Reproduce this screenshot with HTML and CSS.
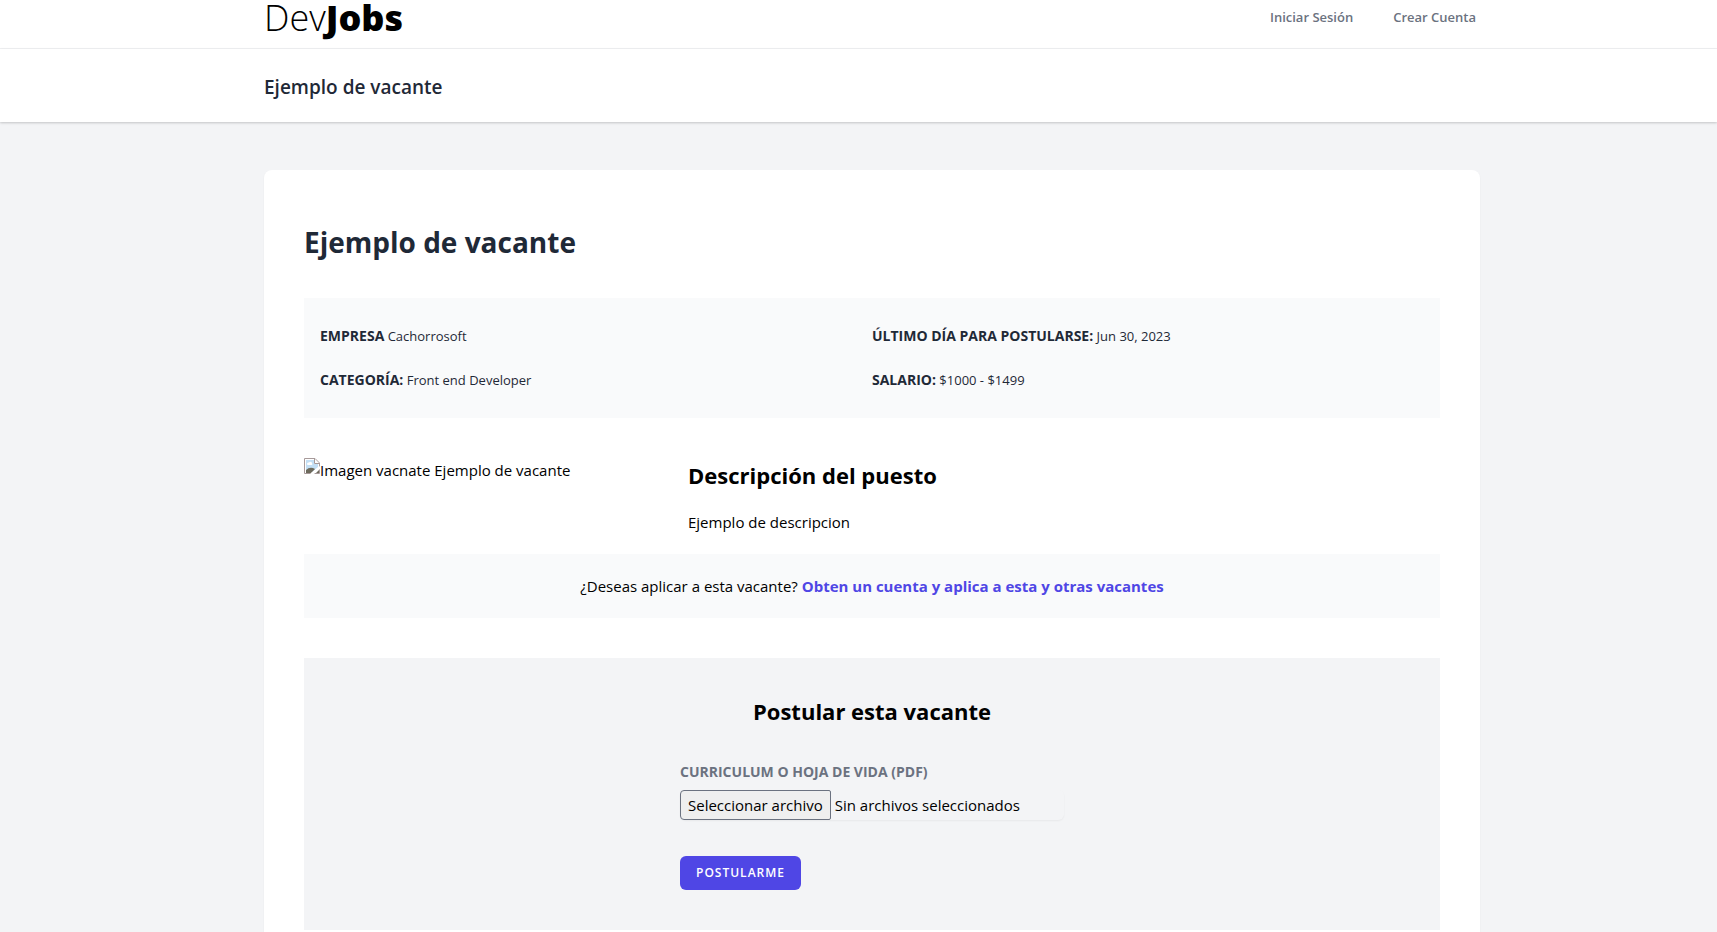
FILE: index.html
```html
<!DOCTYPE html>
<html lang="es">
<head>
<meta charset="utf-8">
<meta name="viewport" content="width=device-width, initial-scale=1">
<title>DevJobs</title>
<link rel="stylesheet" href="styles.css">
</head>
<body>
<nav class="nav gutter">
  <div class="container nav-row">
    <a class="logo" href="#">Dev<span class="logo-strong">Jobs</span></a>
    <div class="nav-links">
      <a class="nav-link" href="#">Iniciar Sesión</a>
      <a class="nav-link" href="#">Crear Cuenta</a>
    </div>
  </div>
</nav>
<header class="header gutter">
  <div class="container">
    <h2 class="header-title">Ejemplo de vacante</h2>
  </div>
</header>
<main class="main gutter">
  <article class="container card">
    <h3 class="title">Ejemplo de vacante</h3>
    <div class="facts">
      <p class="fact"><b class="fact-name">Empresa</b> Cachorrosoft</p>
      <p class="fact"><b class="fact-name">Último día para postularse:</b> Jun 30, 2023</p>
      <p class="fact"><b class="fact-name">Categoría:</b> Front end Developer</p>
      <p class="fact"><b class="fact-name">Salario:</b> $1000 - $1499</p>
    </div>
    <div class="detail">
      <div class="picture">
        <svg class="picture-icon" viewBox="0 0 16 16" aria-hidden="true">
          <path d="M0.500 15.500V0.500H11L15.500 5V15.500Z" fill="#fff" stroke="#a79a9a"/>
          <path d="M2 2H10V6H14V9L8 14H2Z" fill="#c3dff5"/>
          <path d="M3 6Q3 4 5 4.500Q7 3 8 5Q9 7 7 7H4Q3 7 3 6Z" fill="#fff"/>
          <path d="M2 14V12Q5 9 9 10L11 11L7 15H2Z" fill="#6d6a5c"/>
          <path d="M10.500 1V5.500H15" fill="#fff" stroke="#a79a9a"/>
          <path d="M6 16L16 8V11L10 16Z" fill="#fff"/>
          <path d="M12 15L15 12V15Z" fill="#6d6a5c"/>
        </svg>
        <span>Imagen vacnate Ejemplo de vacante</span>
      </div>
      <div class="description">
        <h2 class="subtitle">Descripción del puesto</h2>
        <p class="text">Ejemplo de descripcion</p>
      </div>
    </div>
    <p class="notice">¿Deseas aplicar a esta vacante? <a class="notice-link" href="#">Obten un cuenta y aplica a esta y otras vacantes</a></p>
    <section class="apply">
      <h3 class="subtitle">Postular esta vacante</h3>
      <form class="form">
        <label class="label" for="cv">Curriculum o Hoja de Vida (PDF)</label>
        <label class="file">
          <input class="file-input" id="cv" type="file" accept=".pdf">
          <span class="file-button">Seleccionar archivo</span>
          <span class="file-name">Sin archivos seleccionados</span>
        </label>
        <button class="submit" type="submit">Postularme</button>
      </form>
    </section>
  </article>
</main>
</body>
</html>
```
FILE: styles.css
```css
*, *::before, *::after { box-sizing: border-box; }
body, h2, h3, p { margin: 0; }
body {
  min-height: 100vh;
  background: #f3f4f6;
  color: #000;
  font-family: "Open Sans", "Noto Sans", sans-serif;
  font-size: 15px;
  line-height: 24px;
}
a { text-decoration: none; }

.gutter { padding-left: 59px; padding-right: 32px; }
.container { max-width: 1216px; margin: 0 auto; }

.nav { background: #fff; border-bottom: 1px solid #f0f1f3; }
.nav-row { display: flex; justify-content: space-between; align-items: flex-start; height: 48px; }
.logo { color: #000; font-size: 36px; line-height: 36px; font-weight: 300; }
.logo-strong { font-family: "Noto Sans", "Open Sans", sans-serif; font-weight: 900; }
.nav-links { display: flex; gap: 40px; padding: 7px 4px 0; }
.nav-link { color: #6b7280; font-size: 13px; line-height: 20px; font-weight: 600; }

.header {
  position: relative;
  padding-top: 26px;
  padding-bottom: 22px;
  background: #fff;
  box-shadow: 0 1px 3px rgba(0, 0, 0, .1), 0 1px 2px rgba(0, 0, 0, .1);
}
.header-title { color: #1f2937; font-size: 19px; line-height: 25px; font-weight: 600; }

.main { padding-top: 48px; padding-bottom: 48px; }
.card {
  padding: 40px;
  background: #fff;
  border-radius: 8px;
  box-shadow: 0 1px 2px rgba(0, 0, 0, .05);
}
.title { margin: 14px 0 38px; color: #1f2937; font-size: 28px; line-height: 36px; font-weight: 700; }

.facts { display: grid; grid-template-columns: 1fr 1fr; padding: 16px; background: #f9fafb; }
.fact { margin: 12px 0; color: #1f2937; font-size: 13px; line-height: 20px; }
.fact-name { font-size: 14px; line-height: 16px; font-weight: 700; text-transform: uppercase; }

.detail { display: grid; grid-template-columns: repeat(6, 1fr); gap: 16px; margin-top: 40px; }
.picture { grid-column: span 2; display: flex; align-items: flex-start; }
.picture-icon { flex: none; width: 16px; height: 16px; }
.description { grid-column: span 4; }
.subtitle { font-size: 22px; line-height: 34px; font-weight: 700; }
.text { margin-top: 18px; }

.notice { margin-top: 20px; padding: 20px; background: #f9fafb; text-align: center; }
.notice-link { color: #4f46e5; font-weight: 700; }

.apply {
  display: flex;
  flex-direction: column;
  align-items: center;
  gap: 34px;
  margin-top: 40px;
  padding: 36px 20px 40px;
  background: #f3f4f6;
}
.form { display: flex; flex-direction: column; align-items: flex-start; width: 100%; max-width: 384px; }
.label { color: #6b7280; font-size: 14px; line-height: 20px; font-weight: 700; text-transform: uppercase; }
.file {
  position: relative;
  display: flex;
  align-items: center;
  gap: 4px;
  width: 100%;
  height: 30px;
  margin: 8px 0 36px;
  border-radius: 6px;
  box-shadow: 0 1px 2px rgba(0, 0, 0, .05);
}
.file-input { position: absolute; inset: 0; width: 100%; opacity: 0; }
.file-button {
  padding: 2px 7px;
  border: 1px solid #6b7280;
  border-radius: 4px 2px 2px 4px;
  background: #efefef;
}
.submit {
  padding: 9px 16px;
  border: 0;
  border-radius: 6px;
  background: #4f46e5;
  color: #fff;
  font: 600 12px/16px "Open Sans", "Noto Sans", sans-serif;
  letter-spacing: 1px;
  text-transform: uppercase;
}
```
